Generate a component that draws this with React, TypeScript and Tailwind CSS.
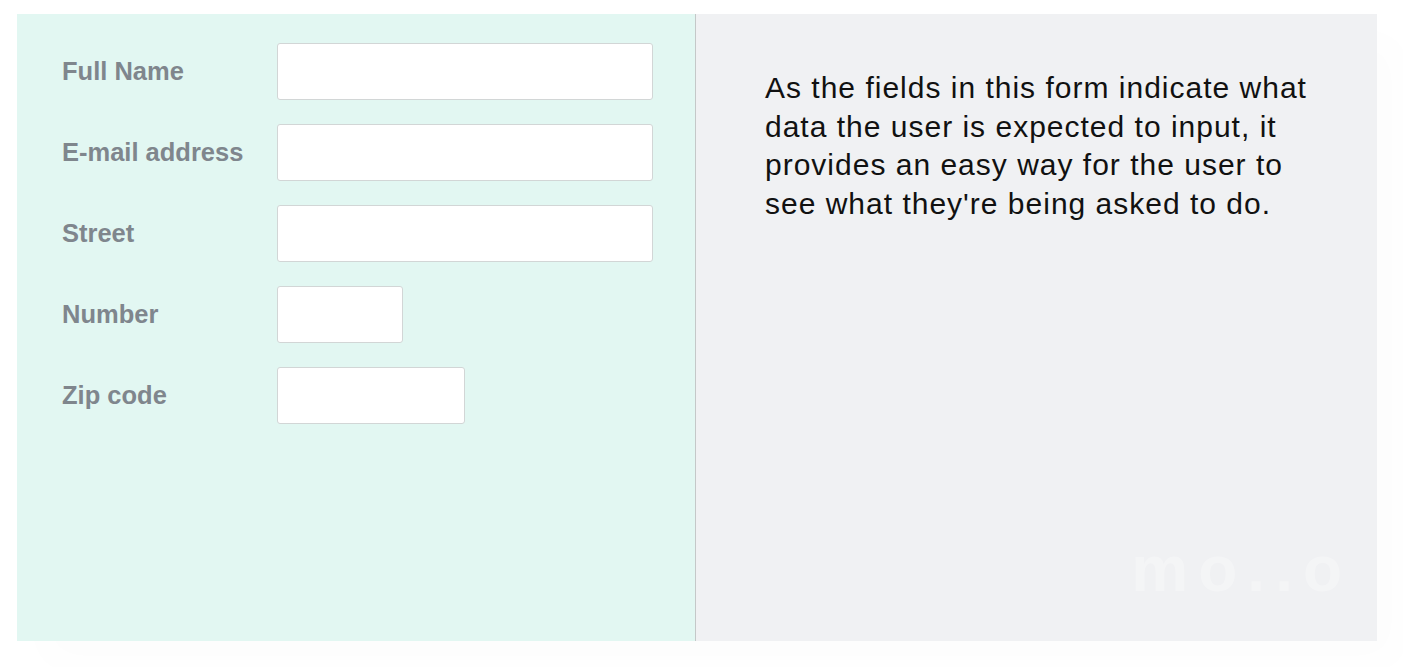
export default function App() {
  const fields = [
    { label: "Full Name", width: "w-[376px]" },
    { label: "E-mail address", width: "w-[376px]" },
    { label: "Street", width: "w-[376px]" },
    { label: "Number", width: "w-[126px]" },
    { label: "Zip code", width: "w-[188px]" },
  ];

  return (
    <div className="h-[667px] w-[1403px] bg-white pl-[17px] pt-[14px] font-['Liberation_Sans',Arial,sans-serif]">
      <div className="flex h-[627px] w-[1360px] shadow-[24px_24px_40px_rgba(0,0,0,0.012)]">
        {/* form side */}
        <div className="flex w-[679px] flex-col gap-[24px] border-r border-[#c4c8c8] bg-[#e2f7f2] pl-[45px] pt-[29px]">
          {fields.map((f) => (
            <div key={f.label} className="flex items-center">
              <label className="w-[215px] text-[25.5px] font-bold text-[#7f868d]">
                {f.label}
              </label>
              <input
                type="text"
                className={`h-[57px] ${f.width} rounded-[3px] border border-[#d2d6d6] bg-white outline-none`}
              />
            </div>
          ))}
        </div>

        {/* description side */}
        <div className="relative flex-1 overflow-hidden bg-[#f0f1f3] pl-[69px] pt-[55px]">
          <p className="relative w-[560px] text-[30px] leading-[38.5px] tracking-[1px] text-[#111111]">
            As the fields in this form indicate what data the user is expected to input, it provides an easy way for the user to see what they're being asked to do.
          </p>
          <div className="absolute bottom-[24px] right-[25px] text-[64px] font-bold tracking-[10px] text-white/30">
            mo..o
          </div>
        </div>
      </div>
    </div>
  );
}
